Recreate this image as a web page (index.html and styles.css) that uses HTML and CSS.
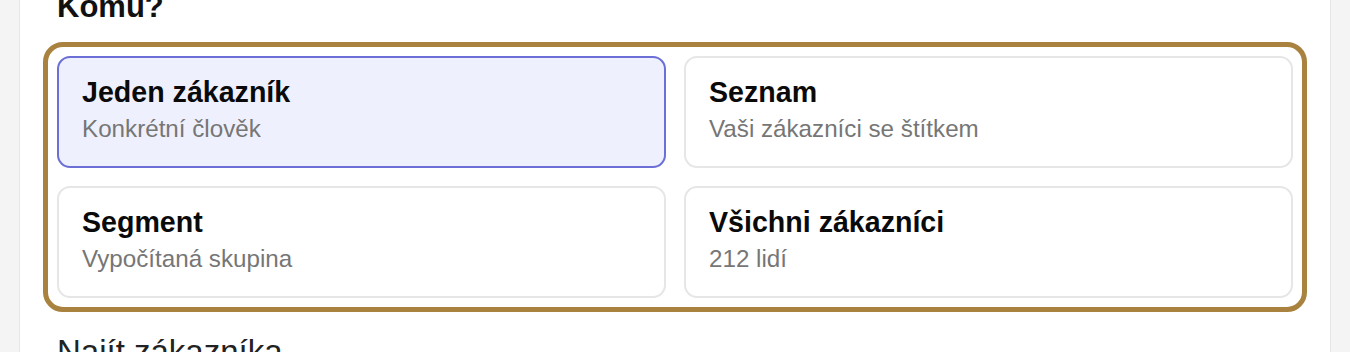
FILE: index.html
```html
<!DOCTYPE html>
<html lang="cs">
<head>
  <meta charset="UTF-8" />
  <meta name="viewport" content="width=device-width, initial-scale=1.0"/>
  <title>Nová kampaň – příjemci</title>
  <link rel="stylesheet" href="styles.css">
</head>
<body>

  <main class="panel">
    <h2 class="section-title">Komu?</h2>

    <div class="audience-picker">
      <button type="button" class="audience-option selected">
        <span class="option-title">Jeden zákazník</span>
        <span class="option-desc">Konkrétní člověk</span>
      </button>
      <button type="button" class="audience-option">
        <span class="option-title">Seznam</span>
        <span class="option-desc">Vaši zákazníci se štítkem</span>
      </button>
      <button type="button" class="audience-option">
        <span class="option-title">Segment</span>
        <span class="option-desc">Vypočítaná skupina</span>
      </button>
      <button type="button" class="audience-option">
        <span class="option-title">Všichni zákazníci</span>
        <span class="option-desc">212 lidí</span>
      </button>
    </div>

    <label class="field-label" for="customerSearch">Najít zákazníka</label>
  </main>

</body>
</html>
```

FILE: styles.css
```css
body {
  font-family: "Liberation Sans", Arial, sans-serif;
  margin: 0;
  padding: 0 19px;
  background-color: #f4f4f4;
  color: #111;
}

.panel {
  background-color: #fff;
  border-left: 1px solid #e6e6e6;
  border-right: 1px solid #e6e6e6;
  padding: 0 23px 40px;
}

.section-title {
  font-size: 31px;
  font-weight: 700;
  line-height: 31px;
  margin: -9px 0 20px 14px;
}

.audience-picker {
  display: grid;
  grid-template-columns: 1fr 1fr;
  gap: 18px;
  padding: 9px;
  border: 5px solid #a8823e;
  border-radius: 20px;
}

.audience-option {
  display: flex;
  flex-direction: column;
  align-items: flex-start;
  text-align: left;
  font-family: inherit;
  background-color: #fff;
  border: 2px solid #e6e6e6;
  border-radius: 13px;
  padding: 17px 23px 22px;
  cursor: pointer;
}

.audience-option.selected {
  background-color: #eef1fd;
  border-color: #6b6fd6;
}

.option-title {
  font-size: 28.6px;
  font-weight: 700;
  line-height: 34px;
  color: #0a0a0a;
}

.option-desc {
  font-size: 24.2px;
  line-height: 30px;
  margin-top: 5px;
  color: #767676;
}

.field-label {
  display: block;
  font-size: 33px;
  line-height: 38px;
  margin: 21px 0 0 14px;
  color: #222;
}
```
